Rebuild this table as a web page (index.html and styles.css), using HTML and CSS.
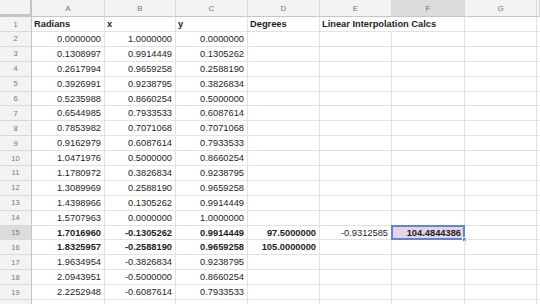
FILE: index.html
```html
<!DOCTYPE html>
<html>
<head>
<meta charset="utf-8">
<link rel="stylesheet" href="styles.css">
</head>
<body>
<div class="sheet">
  <div class="r hdr">
    <div class="corner"></div><div class="ch">A</div><div class="ch">B</div><div class="ch">C</div><div class="ch">D</div><div class="ch">E</div><div class="ch on">F</div><div class="ch">G</div><div class="ch"></div>
  </div>
  <div class="r first">
    <div class="rh">1</div><div class="c l b">Radians</div><div class="c l b">x</div><div class="c l b">y</div><div class="c l b">Degrees</div><div class="c l b spill">Linear Interpolation Calcs</div><div class="c"></div><div class="c"></div><div class="c"></div>
  </div>
  <div class="r"><div class="rh">2</div><div class="c">0.0000000</div><div class="c">1.0000000</div><div class="c">0.0000000</div><div class="c"></div><div class="c"></div><div class="c"></div><div class="c"></div><div class="c"></div></div>
  <div class="r"><div class="rh">3</div><div class="c">0.1308997</div><div class="c">0.9914449</div><div class="c">0.1305262</div><div class="c"></div><div class="c"></div><div class="c"></div><div class="c"></div><div class="c"></div></div>
  <div class="r"><div class="rh">4</div><div class="c">0.2617994</div><div class="c">0.9659258</div><div class="c">0.2588190</div><div class="c"></div><div class="c"></div><div class="c"></div><div class="c"></div><div class="c"></div></div>
  <div class="r"><div class="rh">5</div><div class="c">0.3926991</div><div class="c">0.9238795</div><div class="c">0.3826834</div><div class="c"></div><div class="c"></div><div class="c"></div><div class="c"></div><div class="c"></div></div>
  <div class="r"><div class="rh">6</div><div class="c">0.5235988</div><div class="c">0.8660254</div><div class="c">0.5000000</div><div class="c"></div><div class="c"></div><div class="c"></div><div class="c"></div><div class="c"></div></div>
  <div class="r"><div class="rh">7</div><div class="c">0.6544985</div><div class="c">0.7933533</div><div class="c">0.6087614</div><div class="c"></div><div class="c"></div><div class="c"></div><div class="c"></div><div class="c"></div></div>
  <div class="r"><div class="rh">8</div><div class="c">0.7853982</div><div class="c">0.7071068</div><div class="c">0.7071068</div><div class="c"></div><div class="c"></div><div class="c"></div><div class="c"></div><div class="c"></div></div>
  <div class="r"><div class="rh">9</div><div class="c">0.9162979</div><div class="c">0.6087614</div><div class="c">0.7933533</div><div class="c"></div><div class="c"></div><div class="c"></div><div class="c"></div><div class="c"></div></div>
  <div class="r"><div class="rh">10</div><div class="c">1.0471976</div><div class="c">0.5000000</div><div class="c">0.8660254</div><div class="c"></div><div class="c"></div><div class="c"></div><div class="c"></div><div class="c"></div></div>
  <div class="r"><div class="rh">11</div><div class="c">1.1780972</div><div class="c">0.3826834</div><div class="c">0.9238795</div><div class="c"></div><div class="c"></div><div class="c"></div><div class="c"></div><div class="c"></div></div>
  <div class="r"><div class="rh">12</div><div class="c">1.3089969</div><div class="c">0.2588190</div><div class="c">0.9659258</div><div class="c"></div><div class="c"></div><div class="c"></div><div class="c"></div><div class="c"></div></div>
  <div class="r"><div class="rh">13</div><div class="c">1.4398966</div><div class="c">0.1305262</div><div class="c">0.9914449</div><div class="c"></div><div class="c"></div><div class="c"></div><div class="c"></div><div class="c"></div></div>
  <div class="r"><div class="rh">14</div><div class="c">1.5707963</div><div class="c">0.0000000</div><div class="c">1.0000000</div><div class="c"></div><div class="c"></div><div class="c"></div><div class="c"></div><div class="c"></div></div>
  <div class="r"><div class="rh on">15</div><div class="c b">1.7016960</div><div class="c b">-0.1305262</div><div class="c b">0.9914449</div><div class="c b">97.5000000</div><div class="c">-0.9312585</div><div class="c b sel">104.4844386</div><div class="c"></div><div class="c"></div></div>
  <div class="r"><div class="rh">16</div><div class="c b">1.8325957</div><div class="c b">-0.2588190</div><div class="c b">0.9659258</div><div class="c b">105.0000000</div><div class="c"></div><div class="c"></div><div class="c"></div><div class="c"></div></div>
  <div class="r"><div class="rh">17</div><div class="c">1.9634954</div><div class="c">-0.3826834</div><div class="c">0.9238795</div><div class="c"></div><div class="c"></div><div class="c"></div><div class="c"></div><div class="c"></div></div>
  <div class="r"><div class="rh">18</div><div class="c">2.0943951</div><div class="c">-0.5000000</div><div class="c">0.8660254</div><div class="c"></div><div class="c"></div><div class="c"></div><div class="c"></div><div class="c"></div></div>
  <div class="r"><div class="rh">19</div><div class="c">2.2252948</div><div class="c">-0.6087614</div><div class="c">0.7933533</div><div class="c"></div><div class="c"></div><div class="c"></div><div class="c"></div><div class="c"></div></div>
  <div class="r"><div class="rh"></div><div class="c"></div><div class="c"></div><div class="c"></div><div class="c"></div><div class="c"></div><div class="c"></div><div class="c"></div><div class="c"></div></div>
</div>
</body>
</html>
```

FILE: styles.css
```css
html, body {
  margin: 0;
  padding: 0;
  background: #ffffff;
  overflow: hidden;
}
body {
  width: 540px;
  height: 304px;
  font-family: "Liberation Sans", Arial, sans-serif;
}
.sheet {
  display: flex;
  flex-direction: column;
  width: 540px;
}
.r {
  display: grid;
  grid-template-columns: 32px 73px 71px 72px 72px 72px 73px 72px 1fr;
  height: 14.9px;
  flex: none;
}
.r.hdr {
  height: 17px;
}
.r.first {
  height: 15px;
}
.r > div {
  box-sizing: border-box;
  border-right: 1px solid #e2e2e2;
  border-bottom: 1px solid #e2e2e2;
  white-space: nowrap;
  display: flex;
  align-items: center;
  min-width: 0;
}
.corner {
  background: #f3f3f3;
  border-right: 2px solid #c4c4c4 !important;
  border-bottom: 3px solid #c4c4c4 !important;
}
.ch {
  background: #f3f3f3;
  color: #777777;
  font-size: 8px;
  justify-content: center;
  border-right-color: #d8d8d8 !important;
  border-bottom-color: #c6c6c6 !important;
}
.ch.on, .rh.on {
  background: #dcdcdc;
}
.rh {
  background: #f3f3f3;
  color: #777777;
  font-size: 7.5px;
  justify-content: center;
  border-right-color: #c6c6c6 !important;
  border-bottom-color: #d8d8d8 !important;
}
.c {
  font-size: 9.3px;
  color: #1e1e1e;
  justify-content: flex-end;
  padding: 0 3px 0 2px;
  overflow: visible;
  position: relative;
}
.c.l {
  justify-content: flex-start;
}
.c.b {
  font-weight: bold;
}
.c.spill {
  border-right-color: transparent !important;
}
.c.sel {
  background: #e6d4e3;
}
.c.sel::before {
  content: "";
  position: absolute;
  left: -1px;
  top: -1px;
  right: -1px;
  bottom: -1px;
  border: 2px solid #5c86d9;
  pointer-events: none;
}
.c.sel::after {
  content: "";
  position: absolute;
  right: -3px;
  bottom: -3px;
  width: 5px;
  height: 5px;
  background: #4a7bd8;
  border: 1px solid #ffffff;
  box-sizing: border-box;
}
```
